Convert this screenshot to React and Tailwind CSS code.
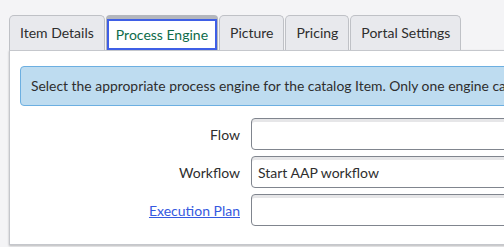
export default function App() {
  const tabs = ["Item Details", "Process Engine", "Picture", "Pricing", "Portal Settings"];
  return (
    <div className="w-[504px] h-[247px] overflow-hidden bg-[#f4f4f6] text-[14px] text-[#2e2e2e]" style={{ fontFamily: "Lato, 'Liberation Sans', sans-serif" }}>
      <div className="pl-[9px] pt-[15px]">
        <div className="flex items-end gap-[1px] h-[35px] w-[700px]">
          {tabs.map((t, i) =>
            i === 1 ? (
              <div key={t} className="h-[35px] border-t-[4px] border-x border-[#b3b6bd] rounded-t-[4px] bg-white relative z-10">
                <div className="h-[31px] border-2 border-[#3f5fe6] px-[7px] flex items-center text-[#0e6b4a] -mb-[1px] pb-[1px]">
                  {t}
                </div>
              </div>
            ) : (
              <div key={t} className="h-[35px] border border-b-0 border-[#bfc1c6] rounded-t-[5px] bg-[#e8e9ed] px-[10px] flex items-center pb-[1px]">
                {t}
              </div>
            )
          )}
        </div>
        <div className="w-[700px] h-[195px] bg-white border border-[#c5c7cc] shadow-[0_1px_2px_rgba(0,0,0,0.25)] pl-[10px] pt-[15px]">
          <div className="h-[40px] bg-[#bedcf0] border border-[#6cafe1] rounded-[4px] flex items-center pl-[10px] whitespace-nowrap text-[13.9px]">
            Select the appropriate process engine for the catalog Item. Only one engine can be selected.
          </div>
          <div className="mt-[12px] flex flex-col gap-[6px]">
            {[
              ["Flow", ""],
              ["Workflow", "Start AAP workflow"],
              ["Execution Plan", ""],
            ].map(([label, val], i) => (
              <div key={label} className="flex items-center">
                <div className="w-[220px] text-right">
                  {i === 2 ? (
                    <span className="text-[#3559e0] underline">{label}</span>
                  ) : (
                    label
                  )}
                </div>
                <div className="ml-[11px] w-[400px] h-[32px] border border-[#80858e] rounded-[4px] bg-white shadow-[inset_0_3px_0_#e6e6e8] flex items-center pl-[6px] pt-[1px]">
                  {val}
                </div>
              </div>
            ))}
          </div>
        </div>
      </div>
    </div>
  );
}
